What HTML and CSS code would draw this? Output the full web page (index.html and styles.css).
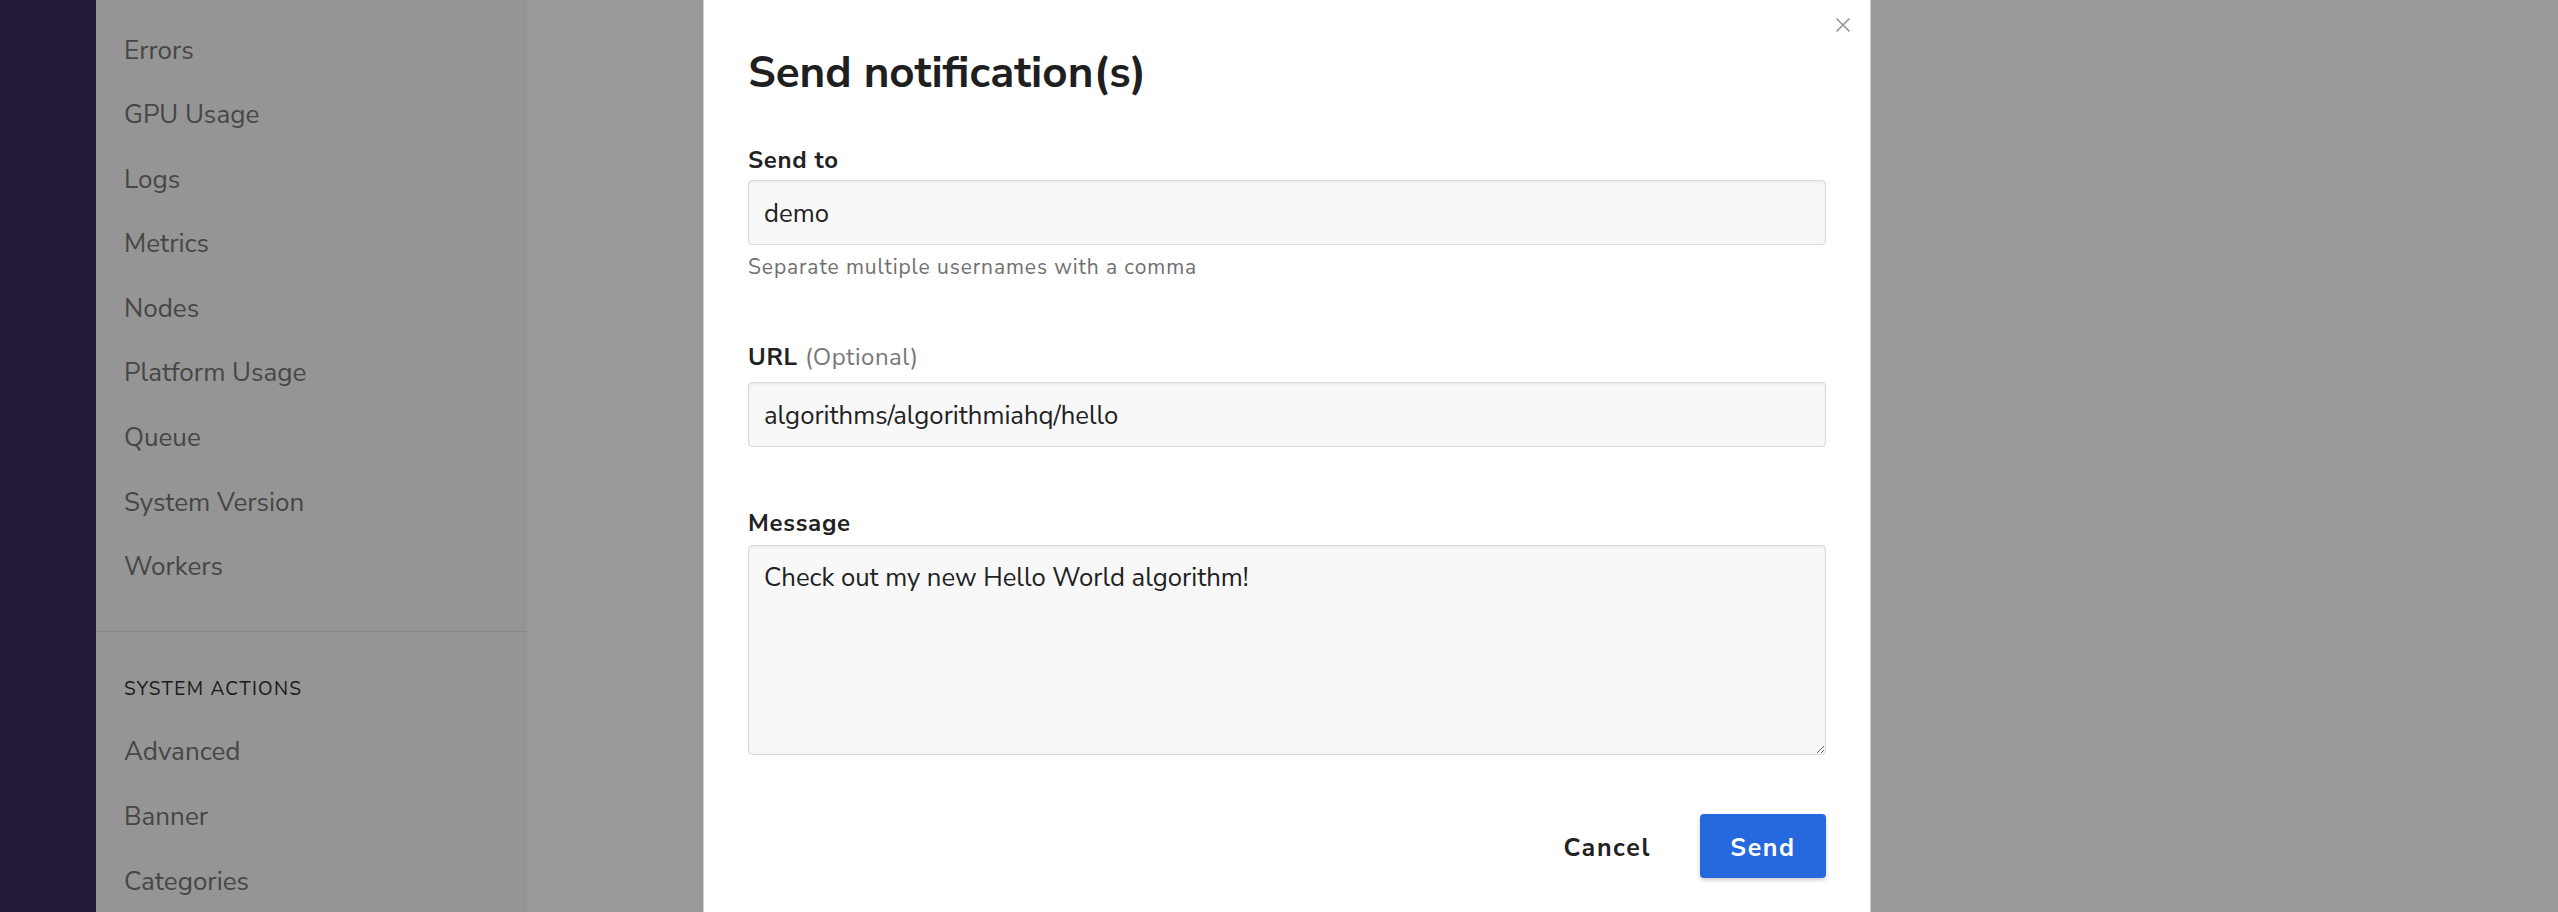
FILE: index.html
```html
<!DOCTYPE html>
<html lang="en">
<head>
<meta charset="utf-8">
<title>Send notification(s)</title>
<link rel="stylesheet" href="styles.css">
</head>
<body>
<div class="app">
  <div class="rail"></div>
  <nav class="sidebar">
    <ul class="nav-list first">
      <li class="nav-item">Errors</li>
      <li class="nav-item">GPU Usage</li>
      <li class="nav-item">Logs</li>
      <li class="nav-item">Metrics</li>
      <li class="nav-item">Nodes</li>
      <li class="nav-item">Platform Usage</li>
      <li class="nav-item">Queue</li>
      <li class="nav-item">System Version</li>
      <li class="nav-item">Workers</li>
    </ul>
    <div class="divider"></div>
    <div class="nav-heading">SYSTEM ACTIONS</div>
    <ul class="nav-list second">
      <li class="nav-item">Advanced</li>
      <li class="nav-item">Banner</li>
      <li class="nav-item">Categories</li>
    </ul>
  </nav>
  <main class="main"></main>
</div>

<div class="overlay">
  <div class="modal">
    <button class="close" aria-label="Close">
      <svg width="16" height="16" viewBox="0 0 16 16"><path d="M1.5 1.5L14.5 14.5M14.5 1.5L1.5 14.5" stroke="#979797" stroke-width="1.7" fill="none"/></svg>
    </button>
    <h2 class="modal-title">Send notification(s)</h2>

    <label class="field-label label-to">Send to</label>
    <input class="field-input input-to" type="text" value="demo">
    <div class="field-help">Separate multiple usernames with a comma</div>

    <label class="field-label label-url">URL <span class="optional">(Optional)</span></label>
    <input class="field-input input-url" type="text" value="algorithms/algorithmiahq/hello">

    <label class="field-label label-msg">Message</label>
    <textarea class="field-textarea">Check out my new Hello World algorithm!</textarea>

    <div class="modal-footer">
      <button class="btn btn-cancel">Cancel</button>
      <button class="btn btn-send">Send</button>
    </div>
  </div>
</div>
</body>
</html>
```

FILE: styles.css
```css
* { box-sizing: border-box; }

html, body {
  margin: 0;
  padding: 0;
  height: 912px;
  overflow: hidden;
  font-family: "Nunito Sans", Lato, "Liberation Sans", sans-serif;
}

.app {
  display: flex;
  height: 912px;
}

.rail {
  width: 96px;
  flex: 0 0 96px;
  background: #3c2d5e;
}

.sidebar {
  width: 431px;
  flex: 0 0 431px;
  background: #f9f9f9;
}

.main {
  flex: 1;
  background: #ffffff;
}

.nav-list {
  list-style: none;
  margin: 0;
  padding: 0;
}

.nav-list.first { padding-top: 18.5px; }
.nav-list.second { margin-top: 19px; }

.nav-item {
  padding-left: 28px;
  height: 64.6px;
  font-size: 26px;
  line-height: 64.6px;
  color: #767676;
}

.nav-list.second .nav-item {
  height: 65.3px;
  line-height: 64.6px;
}

.divider {
  margin-top: 30.8px;
  height: 1px;
  background: #e2e2e2;
}

.nav-heading {
  margin-top: 45px;
  padding-left: 28px;
  font-size: 19px;
  line-height: 24px;
  letter-spacing: 1.3px;
  color: #2c2c2c;
}

.overlay {
  position: fixed;
  inset: 0;
  background: rgba(0, 0, 0, 0.4);
  display: flex;
  justify-content: center;
  align-items: flex-start;
  padding-left: 16px;
  overflow: hidden;
}

.modal {
  position: relative;
  width: 1168px;
  min-height: 1000px;
  background: #ffffff;
  border-left: 1px solid #cfcfcf;
  border-right: 1px solid #cfcfcf;
  padding: 47px 44px 0;
  display: flex;
  flex-direction: column;
  color: #222222;
}

.close {
  position: absolute;
  top: 17px;
  right: 19px;
  width: 16px;
  height: 16px;
  padding: 0;
  border: 0;
  background: none;
  display: block;
}

.close svg { display: block; }

.modal-title {
  margin: 0;
  font-size: 44px;
  line-height: 52px;
  font-weight: 700;
  color: #1f1f1f;
}

.field-label {
  display: block;
  font-size: 24px;
  line-height: 32px;
  font-weight: 700;
  letter-spacing: 0.7px;
  color: #222222;
}

.optional {
  font-weight: 400;
  color: #787878;
  letter-spacing: 0.5px;
}

.label-to { margin-top: 45.4px; }
.label-url { margin-top: 59.7px; }
.label-msg { margin-top: 59.6px; }

.field-input {
  display: block;
  width: 100%;
  height: 65px;
  padding: 2px 15px 0;
  border: 1px solid #d9d9d9;
  border-radius: 4px;
  background: #f8f8f8;
  box-shadow: inset 0 1px 3px rgba(0, 0, 0, 0.07);
  font-family: "Nunito Sans", Lato, "Liberation Sans", sans-serif;
  font-size: 25.7px;
  color: #222222;
  outline: none;
}

.input-to { margin-top: 3.6px; }
.input-url { margin-top: 9.4px; }

.field-help {
  margin-top: 8.4px;
  font-size: 21px;
  line-height: 28px;
  letter-spacing: 0.9px;
  color: #707070;
}

.field-textarea {
  display: block;
  width: 100%;
  height: 210px;
  margin-top: 5.9px;
  padding: 15.2px 15px 10px;
  border: 1px solid #d9d9d9;
  border-radius: 4px;
  background: #f8f8f8;
  box-shadow: inset 0 1px 3px rgba(0, 0, 0, 0.07);
  font-family: "Nunito Sans", Lato, "Liberation Sans", sans-serif;
  font-size: 25.7px;
  line-height: 34px;
  color: #222222;
  outline: none;
}

.modal-footer {
  margin-top: 59px;
  display: flex;
  justify-content: flex-end;
  gap: 17px;
}

.btn {
  height: 64px;
  border: 0;
  border-radius: 4px;
  font-family: "Nunito Sans", Lato, "Liberation Sans", sans-serif;
  font-size: 25px;
  font-weight: 700;
  letter-spacing: 1.6px;
  padding: 5px 32px 0;
}

.btn-cancel {
  background: transparent;
  color: #222222;
}

.btn-send {
  width: 126px;
  padding: 5px 0 0;
  background: #2668de;
  color: #ffffff;
  box-shadow: 0 2px 4px rgba(0, 0, 0, 0.2);
}
```
